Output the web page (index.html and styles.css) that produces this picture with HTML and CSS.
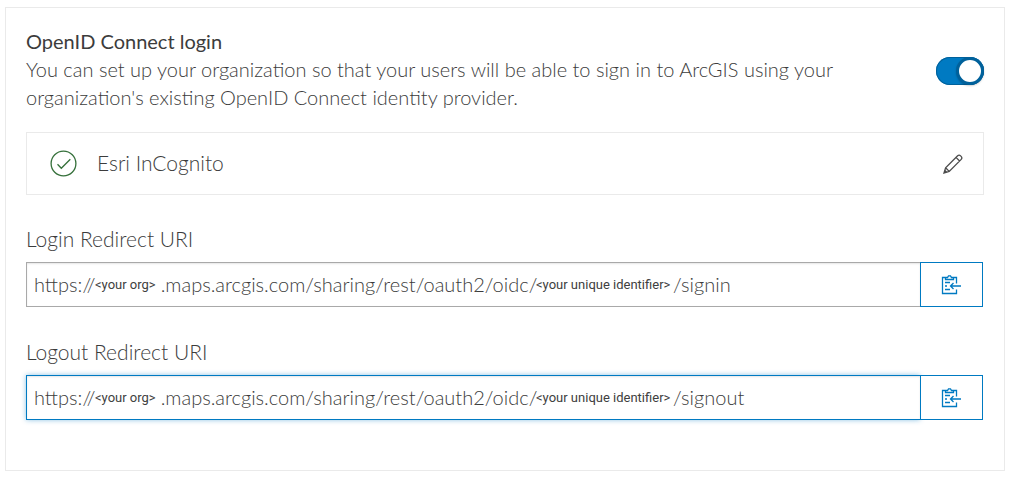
FILE: index.html
```
<!DOCTYPE html>
<html lang="en">
<head>
<meta charset="utf-8">
<title>OpenID Connect login</title>
<link rel="stylesheet" href="styles.css">
</head>
<body>
<main class="panel">
  <section class="intro">
    <div class="intro-text">
      <h2 class="title" id="login-title">OpenID Connect login</h2>
      <p class="description">You can set up your organization so that your users will be able to sign in to ArcGIS using your organization's existing OpenID Connect identity provider.</p>
    </div>
    <input class="switch" type="checkbox" role="switch" aria-labelledby="login-title" checked>
  </section>

  <section class="provider">
    <svg class="provider-status" viewBox="0 0 28 28" aria-hidden="true"><circle cx="13.500" cy="13.500" r="12.400"/><path d="M7.500 14.300l3.800 3.900 9-9"/></svg>
    <span class="provider-name">Esri InCognito</span>
    <button class="edit" type="button" aria-label="Edit Esri InCognito">
      <svg viewBox="0 0 20 20" aria-hidden="true"><path d="M1 19l1.600-5.200L14.400 2c1-1 2.300-1 3.200-.1l.5.500c.9.900.9 2.200-.1 3.200L6.200 17.400zM13 3.400L16.600 7M2.600 13.800l3.600 3.600M1 19l1.300-2.200.9.900z"/></svg>
    </button>
  </section>

  <div class="field">
    <label class="label" for="login-uri">Login Redirect URI</label>
    <div class="group">
      <div class="box">
        <input class="uri" id="login-uri" type="text" readonly value="https://&nbsp;&nbsp;&nbsp;&nbsp;&nbsp;&nbsp;&nbsp;&nbsp;&nbsp;&nbsp;&nbsp;&nbsp;.maps.arcgis.com/sharing/rest/oauth2/oidc/&nbsp;&nbsp;&nbsp;&nbsp;&nbsp;&nbsp;&nbsp;&nbsp;&nbsp;&nbsp;&nbsp;&nbsp;&nbsp;&nbsp;&nbsp;&nbsp;&nbsp;&nbsp;&nbsp;&nbsp;&nbsp;&nbsp;&nbsp;&nbsp;&nbsp;/signin">
        <span class="token token-org">&lt;your org&gt;</span>
        <span class="token token-id">&lt;your unique identifier&gt;</span>
      </div>
      <button class="copy" type="button" aria-label="Copy login redirect URI">
        <svg viewBox="0 0 20 21" aria-hidden="true"><path d="M4.500 3.500h-3v16h14v-4M12.500 3.500h3v6M4.500 5.500v-2h2l1-1.700h2l1 1.700h2v2zM4 8.500h5M4 12h2M4 15.500h5M20 12H9.500M12.500 9l-3 3 3 3"/></svg>
      </button>
    </div>
  </div>

  <div class="field">
    <label class="label" for="logout-uri">Logout Redirect URI</label>
    <div class="group">
      <div class="box">
        <input class="uri uri-active" id="logout-uri" type="text" readonly value="https://&nbsp;&nbsp;&nbsp;&nbsp;&nbsp;&nbsp;&nbsp;&nbsp;&nbsp;&nbsp;&nbsp;&nbsp;.maps.arcgis.com/sharing/rest/oauth2/oidc/&nbsp;&nbsp;&nbsp;&nbsp;&nbsp;&nbsp;&nbsp;&nbsp;&nbsp;&nbsp;&nbsp;&nbsp;&nbsp;&nbsp;&nbsp;&nbsp;&nbsp;&nbsp;&nbsp;&nbsp;&nbsp;&nbsp;&nbsp;&nbsp;&nbsp;/signout">
        <span class="token token-org">&lt;your org&gt;</span>
        <span class="token token-id">&lt;your unique identifier&gt;</span>
      </div>
      <button class="copy" type="button" aria-label="Copy logout redirect URI">
        <svg viewBox="0 0 20 21" aria-hidden="true"><path d="M4.500 3.500h-3v16h14v-4M12.500 3.500h3v6M4.500 5.500v-2h2l1-1.700h2l1 1.700h2v2zM4 8.500h5M4 12h2M4 15.500h5M20 12H9.500M12.500 9l-3 3 3 3"/></svg>
      </button>
    </div>
  </div>
</main>
</body>
</html>
```
FILE: styles.css
```
*,
*::before { box-sizing: border-box; }

body {
  margin: 7px 7px 8px 5px;
  background: #fff;
  color: #3c3c3c;
  font-family: Lato, "Open Sans", sans-serif;
  font-size: 20px;
  font-weight: 300;
  line-height: 28px;
}

.panel {
  border: 1px solid #eaeaea;
  padding: 19px 20px 50px;
}

.intro {
  display: flex;
  align-items: center;
  justify-content: space-between;
  gap: 24px;
}

.intro-text { max-width: 820px; }

.title {
  margin: 0;
  font-size: 20px;
  font-weight: 400;
}

.description { margin: 0; }

.switch {
  appearance: none;
  display: flex;
  flex: none;
  width: 48px;
  height: 28px;
  margin: 4px 0 0;
  border-radius: 14px;
  background: #007ac2;
  box-shadow: inset 0 0 0 1px #00619b;
  cursor: pointer;
}

.switch::before {
  content: "";
  width: 28px;
  height: 28px;
  border: 3px solid #00619b;
  border-radius: 50%;
  background: #fff;
  box-shadow: 0 1px 2px rgba(0, 0, 0, 0.2);
}

.switch:checked::before { margin-left: auto; }

.provider {
  display: flex;
  align-items: center;
  margin: 21px 0 30px;
  height: 63px;
  padding: 0 20px 0 23px;
  border: 1px solid #eaeaea;
}

.provider-status {
  width: 28px;
  height: 28px;
  margin-right: 19px;
  fill: none;
  stroke: #35703a;
  stroke-width: 1.3;
}

.provider-name {
  flex: 1;
  padding-bottom: 2px;
  font-size: 21px;
}

.edit {
  display: flex;
  padding: 0;
  border: 0;
  background: none;
  cursor: pointer;
}

.edit svg {
  width: 20px;
  height: 20px;
  fill: none;
  stroke: #4c4c4c;
  stroke-width: 1.3;
}

.field + .field { margin-top: 31px; }

.label {
  display: block;
  margin-bottom: 9px;
  font-size: 21px;
}

.group {
  display: flex;
  margin-right: 1px;
}

.box {
  position: relative;
  flex: 1;
}

.uri {
  display: block;
  width: 100%;
  height: 45px;
  padding: 0 7px 2px;
  border: 1px solid #a9a9a9;
  border-right: 0;
  border-radius: 0;
  outline: 0;
  background: #fff;
  box-shadow: inset 0 1px 2px rgba(0, 0, 0, 0.1);
  color: #3c3c3c;
  font: inherit;
}

.uri-active {
  border-color: #007ac2;
  box-shadow: inset 0 1px 2px rgba(0, 0, 0, 0.1), 0 0 5px rgba(0, 122, 194, 0.45);
}

.token {
  position: absolute;
  top: 9px;
  color: #404040;
  font-family: Roboto, sans-serif;
  font-size: 13px;
  font-weight: 400;
  pointer-events: none;
}

.token-org { left: 69px; }
.token-id { left: 510px; }

.copy {
  position: relative;
  display: flex;
  align-items: center;
  justify-content: center;
  width: 63px;
  padding: 0 2px 0 0;
  border: 1px solid #007ac2;
  background: #fff;
  cursor: pointer;
}

.copy svg {
  width: 20px;
  height: 21px;
  fill: none;
  stroke: #007ac2;
  stroke-width: 1.3;
}
```
